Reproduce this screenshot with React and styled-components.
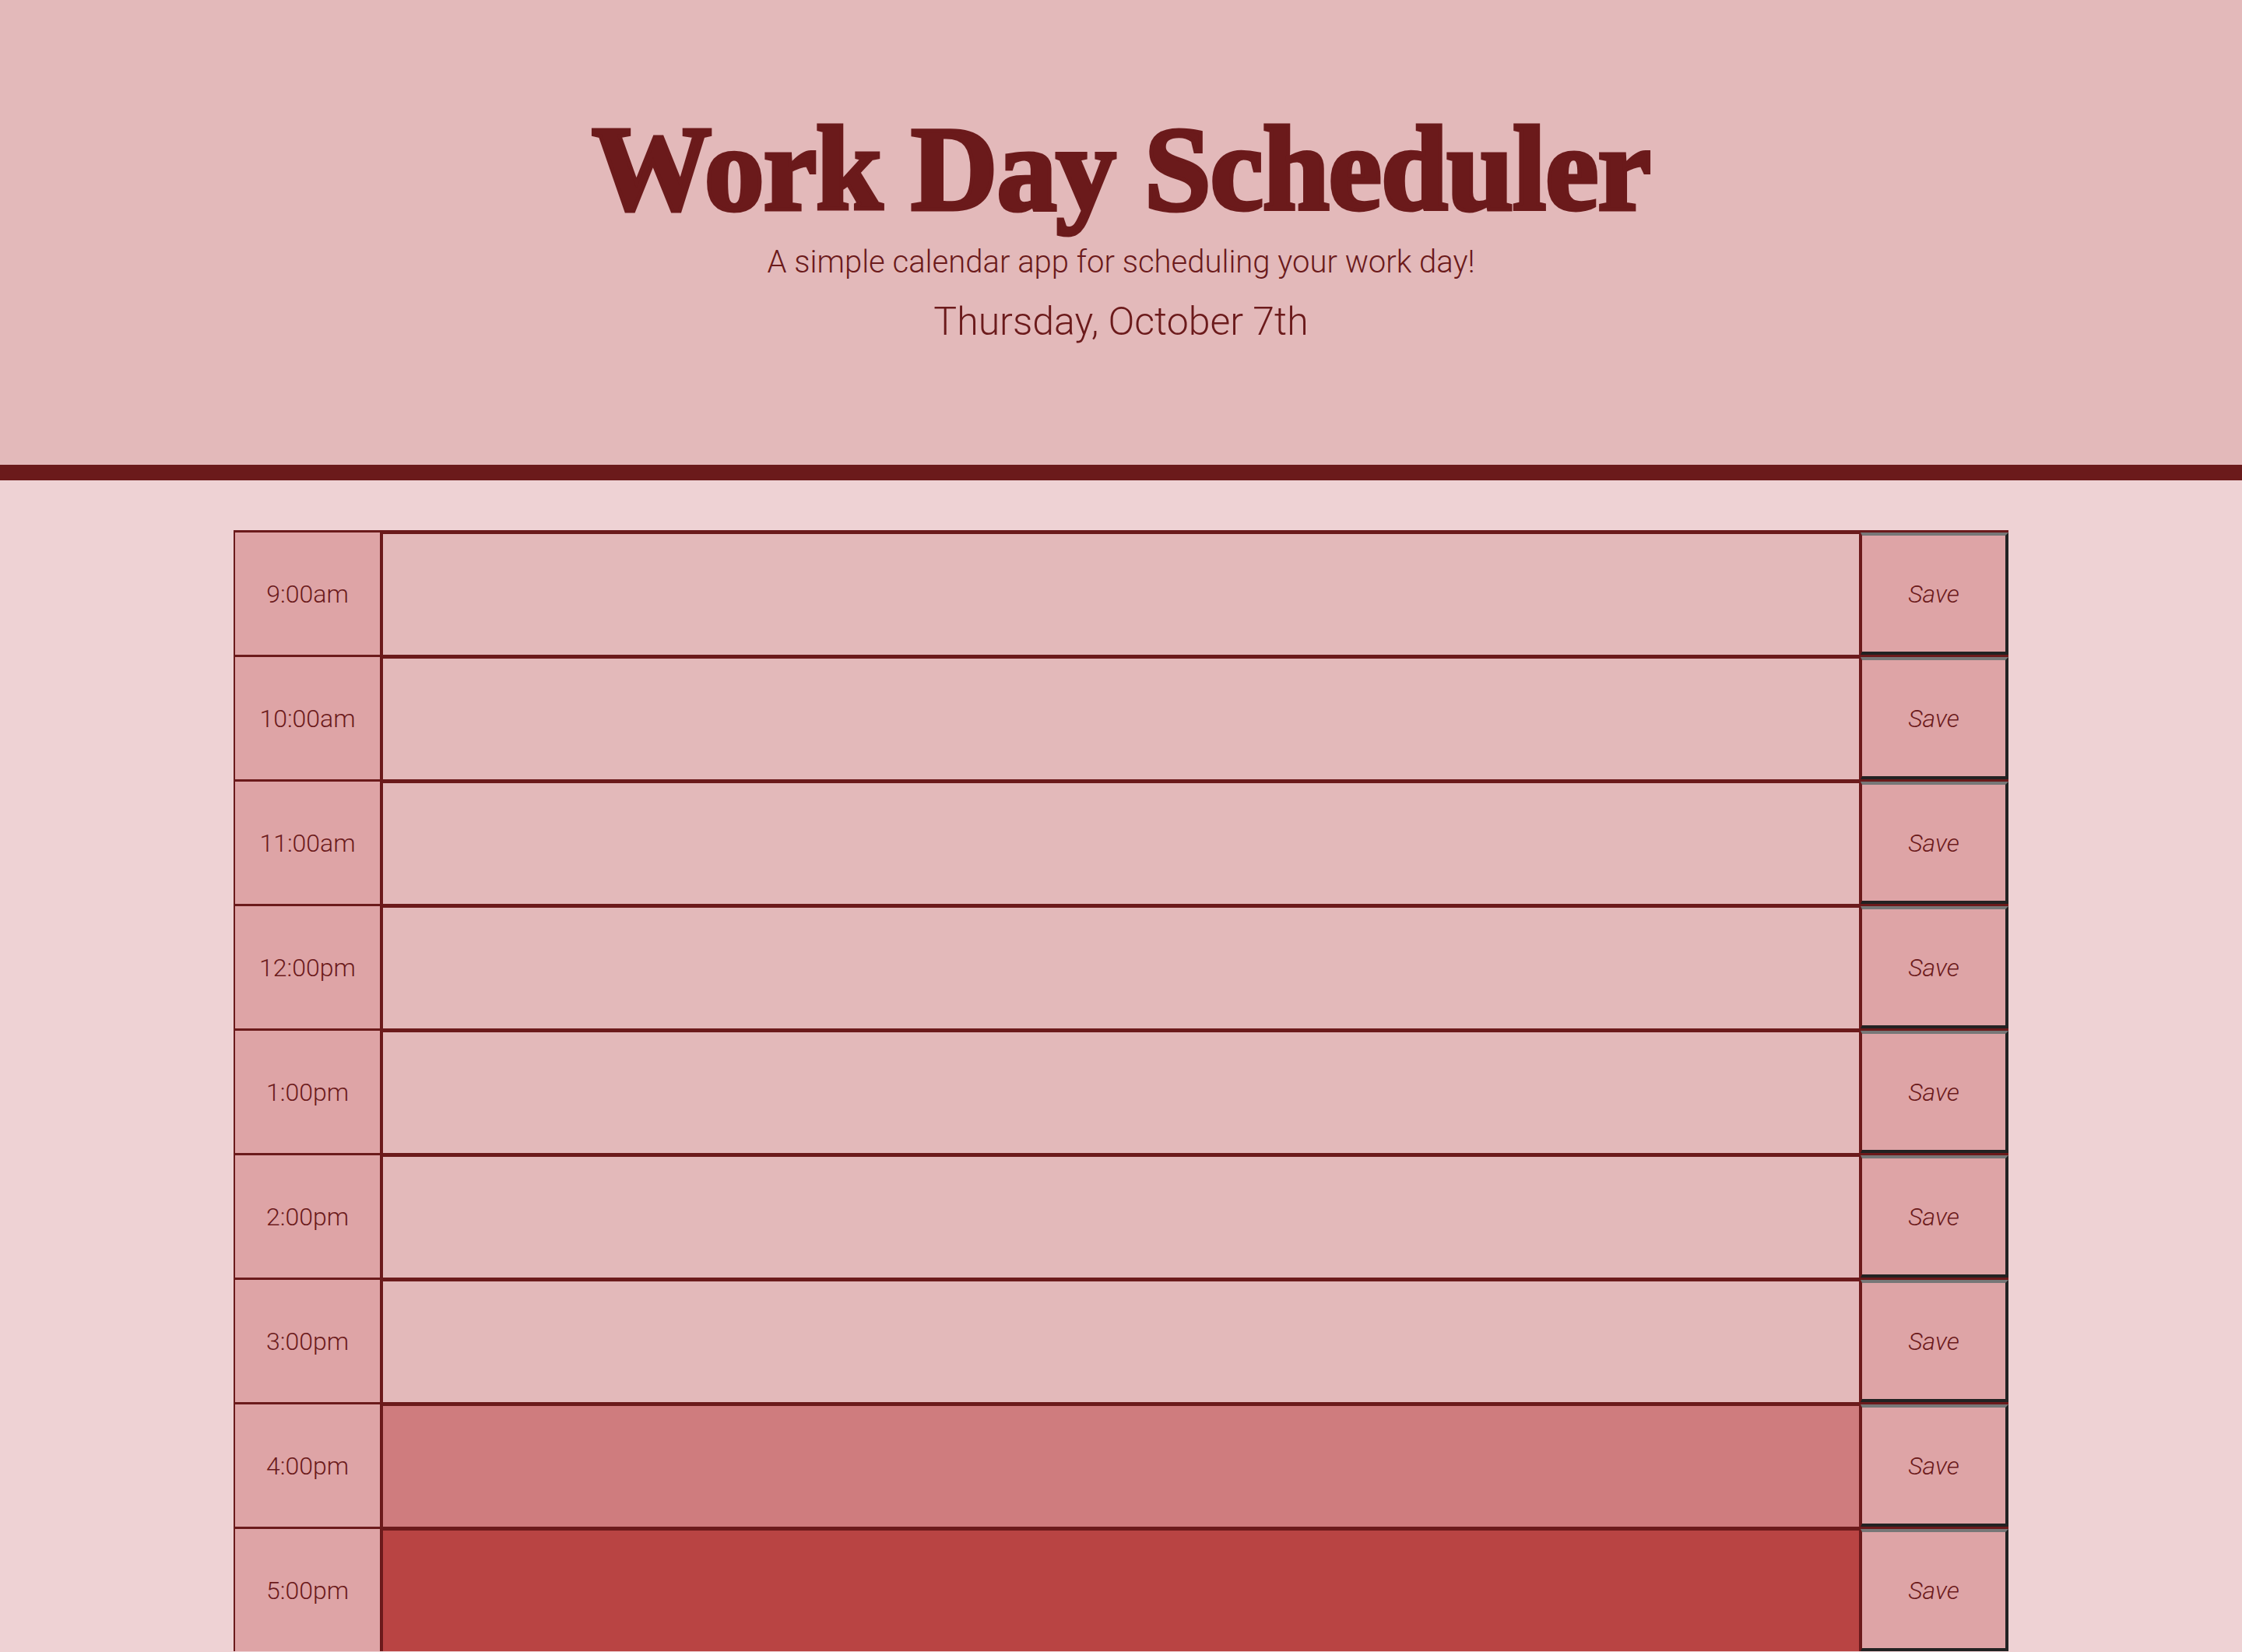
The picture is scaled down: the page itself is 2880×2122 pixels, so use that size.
import React from "react";
import styled, { createGlobalStyle } from "styled-components";

const hours = [
  { label: "9:00am", state: "past" },
  { label: "10:00am", state: "past" },
  { label: "11:00am", state: "past" },
  { label: "12:00pm", state: "past" },
  { label: "1:00pm", state: "past" },
  { label: "2:00pm", state: "past" },
  { label: "3:00pm", state: "past" },
  { label: "4:00pm", state: "present" },
  { label: "5:00pm", state: "future" },
];

const blockColors = {
  past: "#e3b9ba",
  present: "#cf7c7e",
  future: "#b94443",
};

export default function App() {
  return (
    <>
      <GlobalStyle />
      <Header>
        <Title>Work Day Scheduler</Title>
        <Lead>A simple calendar app for scheduling your work day!</Lead>
        <CurrentDay>Thursday, October 7th</CurrentDay>
      </Header>

      <Container>
        {hours.map((hour) => (
          <Row key={hour.label}>
            <Hour>{hour.label}</Hour>
            <Description $state={hour.state} />
            <SaveButton>Save</SaveButton>
          </Row>
        ))}
      </Container>
    </>
  );
}

const GlobalStyle = createGlobalStyle`
  * {
    box-sizing: border-box;
  }

  body {
    margin: 0;
    background: #eed2d4;
    font-family: Roboto, "Open Sans", sans-serif;
    color: #6b1a1b;
  }
`;

const Header = styled.header`
  padding: 140px 0 159px;
  background: #e3b9ba;
  border-bottom: 20px solid #6b1a1b;
  text-align: center;
`;

const Title = styled.h1`
  margin: 0;
  font-family: "Liberation Serif", "DejaVu Serif", serif;
  font-size: 154px;
  font-weight: 700;
  line-height: 1;
  letter-spacing: -1px;
  color: #6b1a1b;
  -webkit-text-stroke: 5px #6b1a1b;
`;

const Lead = styled.p`
  margin: 23px 0 0;
  font-size: 40px;
  font-weight: 300;
  line-height: 1;
`;

const CurrentDay = styled.p`
  margin: 31px 0 0;
  font-size: 50px;
  font-weight: 300;
  line-height: 1;
`;

const Container = styled.main`
  width: 2280px;
  margin: 64px auto 0;
`;

const Row = styled.section`
  display: grid;
  grid-template-columns: 190px 1fr 190px;
  height: 160px;
  border-top: 3px solid #6b1a1b;
`;

const Hour = styled.div`
  display: flex;
  align-items: center;
  justify-content: center;
  background: #dea4a6;
  border-left: 2px solid #6b1a1b;
  border-right: 2px solid #6b1a1b;
  font-size: 32px;
  font-weight: 300;
`;

const Description = styled.textarea`
  display: block;
  width: 100%;
  height: 100%;
  margin: 0;
  padding: 20px;
  resize: none;
  background: ${(p) => blockColors[p.$state]};
  border: 0;
  border-top: 2px solid #6b1a1b;
  border-left: 2px solid #6b1a1b;
  border-right: 2px solid #6b1a1b;
  color: #6b1a1b;
  font: inherit;
  outline: none;
`;

const SaveButton = styled.button`
  margin: 0;
  padding: 0;
  background: #dea4a6;
  border-style: solid;
  border-width: 4px 4px 4px 2px;
  border-color: #777777 #222222 #222222 #6b1a1b;
  color: #6b1a1b;
  font-family: Roboto, sans-serif;
  font-size: 32px;
  font-style: italic;
  font-weight: 300;
  cursor: pointer;
`;
